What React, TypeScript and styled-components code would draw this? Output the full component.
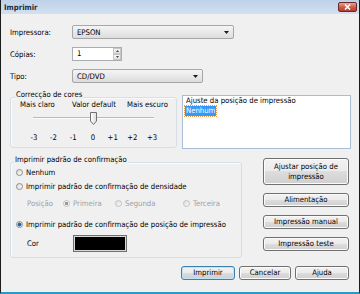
import styled, { createGlobalStyle } from 'styled-components';

const GlobalStyle = createGlobalStyle`
  html, body { margin: 0; padding: 0; background: #f0f0f0; }
  body {
    font-family: "DejaVu Sans Condensed", "DejaVu Sans", sans-serif;
    font-stretch: condensed;
    font-size: 7.7px;
    color: #000;
  }
  * { box-sizing: border-box; }
`;

const Window = styled.div`
  width: 360px;
  height: 294px;
  display: flex;
  flex-direction: column;
  background: #f0f0f0;
  border-left: 1px solid #1c1c1c;
  border-right: 1px solid #1c1c1c;
  border-bottom: 2px solid #2a9ac4;
`;

const TitleBar = styled.div`
  height: 14px;
  flex: none;
  display: flex;
  align-items: center;
  justify-content: space-between;
  padding: 0 2px 0 3px;
  background: linear-gradient(#bcd1e9, #d3e1f0);
`;

const Title = styled.span`
  font-weight: bold;
  color: #1f2d3d;
`;

const CloseButton = styled.div`
  width: 19px;
  height: 10px;
  border: 1px solid #6b2a26;
  border-radius: 2px;
  background: linear-gradient(#e8a597, #cd5f4e 50%, #b83a2c);
  display: flex;
  align-items: center;
  justify-content: center;
`;

const Body = styled.div`
  flex: 1;
  display: flex;
  flex-direction: column;
  padding: 11px 8px 0 9px;
`;

const FormRow = styled.div`
  display: flex;
  align-items: center;
  height: 14px;
  margin-bottom: 8px;
`;

const FieldLabel = styled.span`
  width: 62px;
`;

const SelectBox = styled.div<{ $width: number }>`
  width: ${p => p.$width}px;
  height: 14px;
  border: 1px solid #a7a7a7;
  border-radius: 2px;
  background: linear-gradient(#f5f5f5, #e9e9e9 50%, #dcdcdc);
  display: flex;
  align-items: center;
  justify-content: space-between;
  padding: 0 4px;
`;

const SpinBox = styled.div`
  width: 50px;
  height: 14px;
  border: 1px solid #abadb3;
  background: #fff;
  display: flex;
`;

const SpinValue = styled.span`
  flex: 1;
  padding-left: 4px;
  line-height: 12px;
`;

const SpinButtons = styled.div`
  width: 8px;
  display: flex;
  flex-direction: column;
`;

const SpinArrow = styled.div`
  flex: 1;
  border: 1px solid #c6c6c6;
  background: linear-gradient(#f7f7f7, #e2e2e2);
  display: flex;
  align-items: center;
  justify-content: center;
`;

const MiddleRow = styled.div`
  display: flex;
  gap: 5px;
  align-items: flex-start;
  margin-top: 4px;
`;

const GroupBox = styled.div<{ $width: number; $height: number; $top: number }>`
  position: relative;
  width: ${p => p.$width}px;
  height: ${p => p.$height}px;
  margin-top: ${p => p.$top}px;
  border: 1px solid #d5dfe5;
  border-radius: 3px;
  box-shadow: inset 1px 1px 0 #fbfbfb;
`;

const Legend = styled.span<{ $left: number }>`
  position: absolute;
  top: -7px;
  left: ${p => p.$left}px;
  padding: 0 1px;
  background: #f0f0f0;
  line-height: 8px;
`;

const ScaleLabels = styled.div`
  display: flex;
  height: 8px;
  line-height: 8px;
  margin-top: 3px;
  padding-left: 9px;
`;

const ScaleLabel = styled.span<{ $width: number }>`
  width: ${p => p.$width}px;
  flex: none;
  white-space: nowrap;
`;

const Slider = styled.div`
  position: relative;
  width: 121px;
  height: 14px;
  margin: 2px 0 0 22px;
`;

const Track = styled.div`
  position: absolute;
  left: 0;
  right: 0;
  top: 6px;
  height: 2px;
  border-top: 1px solid #b9b9b9;
  border-bottom: 1px solid #fdfdfd;
`;

const Thumb = styled.svg`
  position: absolute;
  left: 57px;
  top: 1px;
`;

const ScaleNumbers = styled.div`
  display: grid;
  grid-template-columns: repeat(7, 1fr);
  width: 138px;
  height: 10px;
  line-height: 10px;
  margin: 8px 0 0 13px;
  text-align: center;
`;

const ListBox = styled.div`
  width: 169px;
  height: 54px;
  border: 1px solid #a9bdd3;
  background: #fff;
  padding: 0 3px;
  line-height: 10px;
`;

const Selected = styled.span`
  display: inline-block;
  background: #3399ff;
  color: #fff;
  outline: 1px dotted #e69a4a;
  padding: 0 1px;
  margin-left: -1px;
`;

const BottomRow = styled.div`
  display: flex;
  justify-content: space-between;
  align-items: flex-start;
  margin-top: 9px;
`;

const GroupContent = styled.div`
  padding: 4px 0 0 5px;
`;

const RadioRow = styled.div<{ $top: number; $indent?: number }>`
  display: flex;
  align-items: center;
  height: 10px;
  margin-top: ${p => p.$top}px;
  padding-left: ${p => p.$indent ?? 0}px;
`;

const RadioDot = styled.span<{ $checked?: boolean; $disabled?: boolean }>`
  width: 7px;
  height: 7px;
  flex: none;
  border-radius: 50%;
  border: 1px solid ${p => (p.$disabled ? '#c2c2c2' : '#8b8c8c')};
  background: ${p =>
    p.$checked
      ? p.$disabled
        ? 'radial-gradient(circle, #9a9a9a 0 1.6px, #f4f4f4 2px)'
        : 'radial-gradient(circle, #1f5fae 0 1.2px, #5c9be0 1.9px, #f4f4f4 2.3px)'
      : 'linear-gradient(135deg, #dcdcdc, #fafafa)'};
  margin-right: 3px;
`;

const RadioText = styled.span<{ $disabled?: boolean }>`
  color: ${p => (p.$disabled ? '#a0a0a0' : '#000')};
  white-space: nowrap;
`;

const Cell = styled.div<{ $width: number }>`
  width: ${p => p.$width}px;
  display: flex;
  align-items: center;
  flex: none;
`;

const ColorRow = styled.div`
  display: flex;
  align-items: center;
  height: 17px;
  margin-top: 6px;
  padding-left: 11px;
`;

const ColorSwatch = styled.div`
  width: 54px;
  height: 17px;
  border: 1px solid #6f6f6f;
  background: #000;
  box-shadow: inset 0 0 0 1px #d8d8d8;
`;

const ButtonColumn = styled.div`
  width: 86px;
  display: flex;
  flex-direction: column;
  gap: 8px;
  margin-right: 2px;
`;

const PushButton = styled.div<{ $height?: number; $width?: number; $default?: boolean }>`
  height: ${p => p.$height ?? 14}px;
  width: ${p => (p.$width ? `${p.$width}px` : 'auto')};
  border: 1px solid ${p => (p.$default ? '#3c7fb1' : '#707070')};
  border-radius: 3px;
  background: linear-gradient(#f2f2f2, #ebebeb 50%, #dddddd 50%, #cfcfcf);
  box-shadow: inset 0 0 0 1px ${p => (p.$default ? '#bfe3f7' : '#fbfbfb')};
  display: flex;
  align-items: center;
  justify-content: center;
  text-align: center;
  line-height: 10px;
`;

const Footer = styled.div`
  display: flex;
  justify-content: flex-end;
  gap: 4px;
  margin-top: 8px;
  padding-right: 2px;
`;

function DropArrow() {
  return (
    <svg width="5" height="3" viewBox="0 0 5 3">
      <polygon points="0,0 5,0 2.5,3" fill="#1a1a1a" />
    </svg>
  );
}

function Radio({ label, checked, disabled }: { label: string; checked?: boolean; disabled?: boolean }) {
  return (
    <>
      <RadioDot $checked={checked} $disabled={disabled} />
      <RadioText $disabled={disabled}>{label}</RadioText>
    </>
  );
}

export default function App() {
  const scale = ['-3', '-2', '-1', '0', '+1', '+2', '+3'];
  return (
    <>
      <GlobalStyle />
      <Window>
        <TitleBar>
          <Title>Imprimir</Title>
          <CloseButton>
            <svg width="7" height="6" viewBox="0 0 7 6">
              <path d="M1 0.5 L6 5.5 M6 0.5 L1 5.5" stroke="#fff" strokeWidth="1.6" />
            </svg>
          </CloseButton>
        </TitleBar>
        <Body>
          <FormRow>
            <FieldLabel>Impressora:</FieldLabel>
            <SelectBox $width={162}>
              <span>EPSON</span>
              <DropArrow />
            </SelectBox>
          </FormRow>
          <FormRow>
            <FieldLabel>Cópias:</FieldLabel>
            <SpinBox>
              <SpinValue>1</SpinValue>
              <SpinButtons>
                <SpinArrow>
                  <svg width="3" height="2" viewBox="0 0 3 2"><polygon points="0,2 3,2 1.5,0" fill="#444" /></svg>
                </SpinArrow>
                <SpinArrow>
                  <svg width="3" height="2" viewBox="0 0 3 2"><polygon points="0,0 3,0 1.5,2" fill="#444" /></svg>
                </SpinArrow>
              </SpinButtons>
            </SpinBox>
          </FormRow>
          <FormRow>
            <FieldLabel>Tipo:</FieldLabel>
            <SelectBox $width={131}>
              <span>CD/DVD</span>
              <DropArrow />
            </SelectBox>
          </FormRow>

          <MiddleRow>
            <GroupBox $width={167} $height={51} $top={2}>
              <Legend $left={4}>Correcção de cores</Legend>
              <ScaleLabels>
                <ScaleLabel $width={52}>Mais claro</ScaleLabel>
                <ScaleLabel $width={55}>Valor default</ScaleLabel>
                <ScaleLabel $width={45}>Mais escuro</ScaleLabel>
              </ScaleLabels>
              <Slider>
                <Track />
                <Thumb width="7" height="13" viewBox="0 0 7 13">
                  <defs>
                    <linearGradient id="thumbFill" x1="0" y1="0" x2="1" y2="0">
                      <stop offset="0" stopColor="#ffffff" />
                      <stop offset="1" stopColor="#dcdcdc" />
                    </linearGradient>
                  </defs>
                  <path d="M0.5 0.5 H6.5 V9 L3.5 12.5 L0.5 9 Z" fill="url(#thumbFill)" stroke="#707070" />
                </Thumb>
              </Slider>
              <ScaleNumbers>
                {scale.map(n => (
                  <span key={n}>{n}</span>
                ))}
              </ScaleNumbers>
            </GroupBox>
            <ListBox>
              <div>Ajuste da posição de impressão</div>
              <Selected>Nenhum</Selected>
            </ListBox>
          </MiddleRow>

          <BottomRow>
            <GroupBox $width={232} $height={96} $top={4}>
              <Legend $left={3}>Imprimir padrão de confirmação</Legend>
              <GroupContent>
                <RadioRow $top={0}>
                  <Radio label="Nenhum" />
                </RadioRow>
                <RadioRow $top={4}>
                  <Radio label="Imprimir padrão de confirmação de densidade" />
                </RadioRow>
                <RadioRow $top={7} $indent={11}>
                  <Cell $width={36}>
                    <RadioText $disabled>Posição</RadioText>
                  </Cell>
                  <Cell $width={52}>
                    <Radio label="Primeira" checked disabled />
                  </Cell>
                  <Cell $width={68}>
                    <Radio label="Segunda" disabled />
                  </Cell>
                  <Cell $width={50}>
                    <Radio label="Terceira" disabled />
                  </Cell>
                </RadioRow>
                <RadioRow $top={11}>
                  <Radio label="Imprimir padrão de confirmação de posição de impressão" checked />
                </RadioRow>
                <ColorRow>
                  <Cell $width={46}>Cor</Cell>
                  <ColorSwatch />
                </ColorRow>
              </GroupContent>
            </GroupBox>
            <ButtonColumn>
              <PushButton $height={27}>
                Ajustar posição de
                <br />
                impressão
              </PushButton>
              <PushButton>Alimentação</PushButton>
              <PushButton>Impressão manual</PushButton>
              <PushButton>Impressão teste</PushButton>
            </ButtonColumn>
          </BottomRow>

          <Footer>
            <PushButton $width={54} $default>
              Imprimir
            </PushButton>
            <PushButton $width={52}>Cancelar</PushButton>
            <PushButton $width={54}>Ajuda</PushButton>
          </Footer>
        </Body>
      </Window>
    </>
  );
}
